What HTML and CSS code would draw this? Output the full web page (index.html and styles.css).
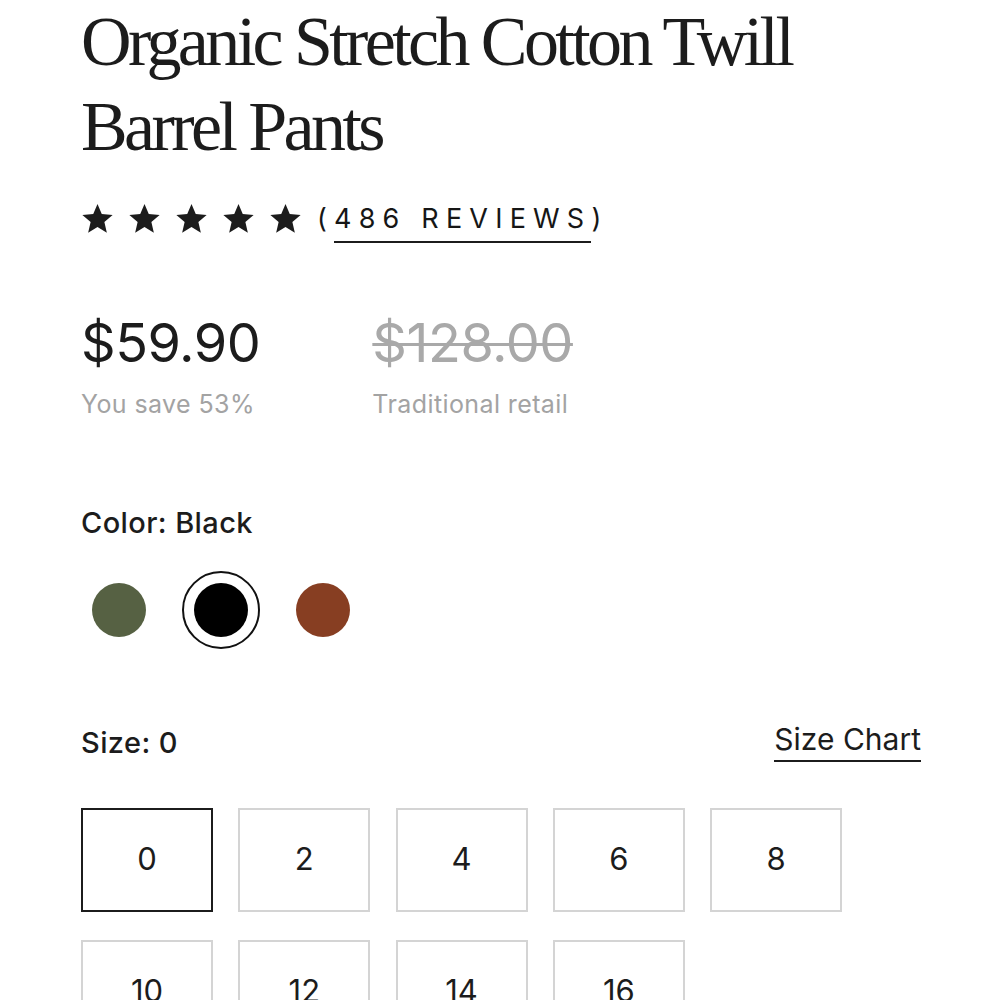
FILE: index.html
```html
<!DOCTYPE html>
<html lang="en">
<head>
    <meta charset="UTF-8">
    <meta name="viewport" content="width=device-width, initial-scale=1.0">
    <title>Organic Stretch Cotton Twill Barrel Pants</title>
    <link rel="stylesheet" href="styles.css">
</head>
<body>
    <div class="product">
        <h1 class="title">Organic Stretch Cotton Twill Barrel Pants</h1>

        <div class="rating">
            <div class="stars">
                <svg viewBox="0 0 24 24"><path d="M12 1.5l3.1 7.3 7.9.6-6 5.2 1.8 7.7L12 18.2l-6.8 4.1 1.8-7.7-6-5.2 7.9-.6z"/></svg>
                <svg viewBox="0 0 24 24"><path d="M12 1.5l3.1 7.3 7.9.6-6 5.2 1.8 7.7L12 18.2l-6.8 4.1 1.8-7.7-6-5.2 7.9-.6z"/></svg>
                <svg viewBox="0 0 24 24"><path d="M12 1.5l3.1 7.3 7.9.6-6 5.2 1.8 7.7L12 18.2l-6.8 4.1 1.8-7.7-6-5.2 7.9-.6z"/></svg>
                <svg viewBox="0 0 24 24"><path d="M12 1.5l3.1 7.3 7.9.6-6 5.2 1.8 7.7L12 18.2l-6.8 4.1 1.8-7.7-6-5.2 7.9-.6z"/></svg>
                <svg viewBox="0 0 24 24"><path d="M12 1.5l3.1 7.3 7.9.6-6 5.2 1.8 7.7L12 18.2l-6.8 4.1 1.8-7.7-6-5.2 7.9-.6z"/></svg>
            </div>
            <span class="reviews">(<a href="#" class="reviews-link">486 REVIEWS</a>)</span>
        </div>

        <div class="prices">
            <div class="price-col">
                <div class="price">$59.90</div>
                <div class="price-note">You save 53%</div>
            </div>
            <div class="price-col">
                <div class="price old">$128.00</div>
                <div class="price-note">Traditional retail</div>
            </div>
        </div>

        <div class="option-label">Color: Black</div>
        <div class="swatches">
            <button class="swatch"><span class="dot green"></span></button>
            <button class="swatch selected"><span class="dot black"></span></button>
            <button class="swatch"><span class="dot rust"></span></button>
        </div>

        <div class="size-head">
            <div class="option-label">Size: 0</div>
            <a href="#" class="size-chart">Size Chart</a>
        </div>
        <div class="sizes">
            <button class="size selected">0</button>
            <button class="size">2</button>
            <button class="size">4</button>
            <button class="size">6</button>
            <button class="size">8</button>
            <button class="size">10</button>
            <button class="size">12</button>
            <button class="size">14</button>
            <button class="size">16</button>
        </div>
    </div>
</body>
</html>
```

FILE: styles.css
```css
body {
    margin: 0;
    background: #ffffff;
    color: #1c1c1c;
    font-family: Inter, 'Liberation Sans', Arial, sans-serif;
}
.product {
    padding: 0 79px 0 81px;
}
.title {
    font-family: 'Liberation Serif', 'Times New Roman', serif;
    font-weight: normal;
    font-size: 70px;
    line-height: 85px;
    letter-spacing: -3.6px;
    margin: -1px 0 0;
    width: 760px;
}
.rating {
    display: flex;
    align-items: center;
    margin-top: 33px;
}
.stars {
    display: flex;
    gap: 14px;
}
.stars svg {
    width: 33px;
    height: 33px;
    fill: #1c1c1c;
}
.reviews {
    font-size: 27px;
    letter-spacing: 7.2px;
    margin-left: 15px;
    color: #161616;
}
.reviews-link {
    color: inherit;
    text-decoration: none;
    border-bottom: 2px solid #1c1c1c;
    padding-bottom: 6px;
}
.prices {
    display: flex;
    gap: 112px;
    margin-top: 76px;
}
.price {
    font-size: 54px;
    line-height: 64px;
    letter-spacing: -0.5px;
}
.price.old {
    color: #a9a9a9;
    text-decoration: line-through;
    text-decoration-thickness: 3px;
}
.price-note {
    color: #a3a3a3;
    font-size: 25px;
    letter-spacing: 0.4px;
    margin-top: 14px;
}
.option-label {
    font-size: 29px;
    font-weight: 500;
    letter-spacing: 0.4px;
    color: #1c1c1c;
}
.prices + .option-label {
    margin-top: 86px;
}
.swatches {
    display: flex;
    gap: 24px;
    margin-top: 31px;
    margin-left: -1px;
}
.swatch {
    width: 78px;
    height: 78px;
    border-radius: 50%;
    border: 2px solid transparent;
    background: none;
    padding: 0;
    display: flex;
    align-items: center;
    justify-content: center;
    cursor: pointer;
}
.swatch.selected {
    border-color: #111;
}
.dot {
    width: 54px;
    height: 54px;
    border-radius: 50%;
}
.dot.green { background: #566143; }
.dot.black { background: #000; }
.dot.rust { background: #873e22; }
.size-head {
    display: flex;
    justify-content: space-between;
    align-items: flex-start;
    margin-top: 76px;
}
.size-chart {
    font-size: 30px;
    color: #1c1c1c;
    text-decoration: none;
    border-bottom: 2px solid #1c1c1c;
    padding-bottom: 3px;
    margin-top: -4px;
}
.sizes {
    display: grid;
    grid-template-columns: repeat(5, 132px);
    gap: 28px 25.3px;
    margin-top: 46px;
}
.size {
    height: 104px;
    border: 2px solid #d4d4d4;
    background: #fff;
    font-family: Inter, 'Liberation Sans', Arial, sans-serif;
    font-size: 31px;
    color: #1c1c1c;
    padding: 0 0 3px;
    cursor: pointer;
}
.size.selected {
    border-color: #1c1c1c;
}
```
